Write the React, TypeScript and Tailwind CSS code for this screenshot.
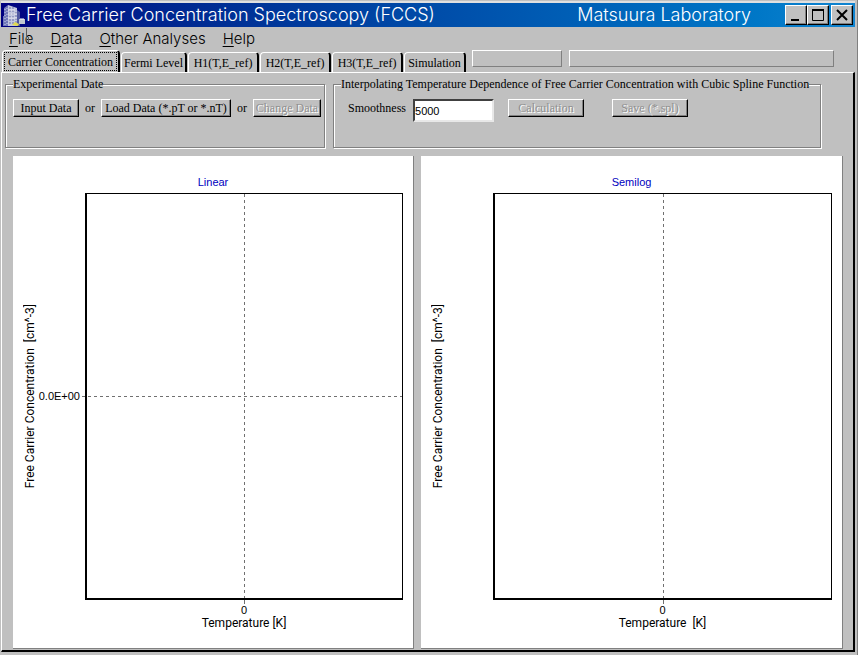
import type { ReactNode } from "react";

const CAPTION = "font-['Inter','Liberation_Sans',sans-serif] font-light";
const SANS = "font-['Liberation_Sans','Noto_Sans_CJK_JP',sans-serif]";
const AXIS = "font-['Roboto','Liberation_Sans',sans-serif] text-[12px]";
const SERIF = "font-['Liberation_Serif','Noto_Sans_CJK_JP',serif]";
const RAISED =
  "border border-t-white border-l-white border-r-black border-b-black shadow-[inset_-1px_-1px_0_#808080]";

function AppIcon() {
  return (
    <svg width="24" height="23" viewBox="0 0 24 23" aria-hidden="true" className="shrink-0">
      <path d="M3 4 L7 1 V22 H2 V12 H3Z" fill="#7078b8" />
      <path d="M7 1 L16 4 V22 H7Z" fill="#c4c8e0" />
      <path d="M16 6 L19 8 V22 H16Z" fill="#5058a0" />
      <path d="M9 3V21M12 3V21M15 5V21" stroke="#6870a8" strokeDasharray="2 1" />
      <path d="M4 5V21M6 4V21" stroke="#d0d4f0" strokeDasharray="1 2" />
      <path d="M7 6H16M7 10H16M7 14H16" stroke="#e8e8f0" />
      <path d="M18 15H24V20H18Z" fill="#c0c8d0" />
      <path d="M19 15H23" stroke="#fff" />
      <path d="M11 21 L14 18 L18 20 L17 22Z" fill="#e0d850" />
    </svg>
  );
}

function WindowButton({ label, children }: { label: string; children: ReactNode }) {
  return (
    <button aria-label={label} className={`flex h-5 w-[22px] items-center justify-center bg-[#c0c0c0] ${RAISED}`}>
      <svg width="16" height="16" viewBox="0 0 16 16" fill="none" stroke="#000" strokeWidth="2">
        {children}
      </svg>
    </button>
  );
}

function MenuItem({ text }: { text: string }) {
  return (
    <button className="leading-5">
      <span className="underline underline-offset-2">{text[0]}</span>
      {text.slice(1)}
    </button>
  );
}

function Tab({ text, width, active = false }: { text: string; width: string; active?: boolean }) {
  return (
    <button
      role="tab"
      aria-selected={active}
      className={`${width} ${active ? "h-[22px] p-px" : "h-5"} rounded-t-sm border-t border-l border-r-2 border-t-white border-l-white border-r-black whitespace-nowrap`}
    >
      <span className={`flex h-full items-center justify-center ${active ? "border border-dotted border-black" : ""}`}>
        {text}
      </span>
    </button>
  );
}

function PushButton({ children, width, disabled = false }: { children: string; width: string; disabled?: boolean }) {
  return (
    <button
      disabled={disabled}
      className={`${width} flex h-[18px] shrink-0 items-center justify-center whitespace-nowrap ${RAISED} ${
        disabled ? "text-[#909090] [text-shadow:1px_1px_0_#fff]" : ""
      }`}
    >
      {children}
    </button>
  );
}

function Group({ title, className, children }: { title: string; className: string; children: ReactNode }) {
  return (
    <fieldset
      className={`${className} h-[71px] min-w-0 border border-[#808080] px-[7px] shadow-[1px_1px_0_#fff,inset_1px_1px_0_#fff]`}
    >
      <legend className="bg-[#c0c0c0] leading-[14px] whitespace-nowrap">{title}</legend>
      {children}
    </fieldset>
  );
}

function Chart({ title, xLabel, tick }: { title: string; xLabel: string; tick?: string }) {
  return (
    <figure
      className={`${SANS} grid grid-cols-[72px_1fr] grid-rows-[37px_1fr_48px] border-r border-b border-[#808080] bg-white pr-2.5 text-[11px] leading-[13px]`}
    >
      <figcaption className="col-span-2 -mr-2.5 pt-5 text-center text-[#0000c0]">{title}</figcaption>
      <div className="flex items-center justify-between pr-[5px] pl-[11px]">
        <span className={`${AXIS} rotate-180 whitespace-pre [writing-mode:vertical-rl]`}>
          {"Free Carrier Concentration  [cm^-3]"}
        </span>
        <span>{tick}</span>
      </div>
      <div className="border-t border-r border-b-2 border-l-2 border-black">
        <svg width="100%" height="100%" className="block overflow-visible" stroke="#707070" strokeDasharray="3 3" shapeRendering="crispEdges">
          <line x1="50%" y1="0" x2="50%" y2="100%" />
          <svg y="100%" className="overflow-visible">
            <line x1="50%" y1="2" x2="50%" y2="6" strokeDasharray="none" />
          </svg>
          {tick && <line x1="-5" y1="50%" x2="100%" y2="50%" />}
        </svg>
      </div>
      <div className="col-start-2 pt-1 text-center whitespace-pre">
        <div>0</div>
        <div className={AXIS}>{xLabel}</div>
      </div>
    </figure>
  );
}

export default function App() {
  return (
    <div className="flex min-h-screen flex-col border-r border-[#808080] bg-[#c0c0c0] pt-px pr-0.5 pb-[3px] pl-px text-black">
      <header className="mb-px flex h-[26px] items-center border-t-2 border-[#e0e0e0] bg-linear-to-r from-[#000080] to-[#1084d0] pr-0.5 text-white">
        <AppIcon />
        <div className={`${CAPTION} flex flex-1 items-center justify-between pr-[34px] pl-px text-[18px] leading-6 whitespace-nowrap`}>
          <h1>Free Carrier Concentration Spectroscopy (FCCS)</h1>
          <span>Matsuura Laboratory</span>
        </div>
        <div className="flex">
          <WindowButton label="Minimize">
            <path d="M3 13H11" />
          </WindowButton>
          <WindowButton label="Maximize">
            <path d="M2 3H14" />
            <path d="M2.5 3V13.5H13.5V3" strokeWidth="1" />
          </WindowButton>
          <div className="w-0.5" />
          <WindowButton label="Close">
            <path d="M3 3L13 13M13 3L3 13" />
          </WindowButton>
        </div>
      </header>

      <nav className={`${CAPTION} relative flex h-[22px] items-center gap-[17px] pl-2 text-[15px]`}>
        <MenuItem text="File" />
        <MenuItem text="Data" />
        <MenuItem text="Other Analyses" />
        <MenuItem text="Help" />
        <svg width="6" height="16" viewBox="0 0 6 16" className="absolute top-0 left-6" stroke="#606060" fill="none">
          <path d="M1.5 0V13M3.5 9V15" />
        </svg>
      </nav>

      <div className={`${SERIF} flex items-end gap-px pl-px text-[12px] leading-[14px]`}>
        <div role="tablist" className="flex items-end gap-px">
          <Tab text="Carrier Concentration" width="w-[118px]" active />
          <Tab text="Fermi Level" width="w-[66px]" />
          <Tab text="H1(T,E_ref)" width="w-[71px]" />
          <Tab text="H2(T,E_ref)" width="w-[71px]" />
          <Tab text="H3(T,E_ref)" width="w-[71px]" />
          <Tab text="Simulation" width="w-[62px]" />
        </div>
        <div className="flex flex-1 gap-[7px] self-start pr-[21px] pl-[5px]">
          <div className="h-[17px] w-[90px] border border-t-white border-l-white border-r-[#808080] border-b-[#808080]" />
          <div className="h-[17px] flex-1 border border-t-white border-l-white border-r-[#808080] border-b-[#808080]" />
        </div>
      </div>

      <main
        className={`${SERIF} flex flex-1 flex-col border-t border-r-2 border-b-2 border-l border-t-white border-r-black border-b-black border-l-white pr-2.5 pb-px pl-[3px] text-[12px] leading-[14px]`}
      >
        <div className="flex gap-2 pt-1 pr-[22px]">
          <Group title="Experimental Date" className="w-80 shrink-0">
            <div className="flex items-center gap-1.5 pt-2">
              <PushButton width="w-[66px]">Input Data</PushButton>
              <span>or</span>
              <PushButton width="w-[130px]">Load Data (*.pT or *.nT)</PushButton>
              <span>or</span>
              <PushButton width="w-[68px]" disabled>
                Change Data
              </PushButton>
            </div>
          </Group>
          <Group
            title="Interpolating Temperature Dependence of Free Carrier Concentration with Cubic Spline Function"
            className="flex-1"
          >
            <div className="flex items-start pt-2 pl-[7px]">
              <label htmlFor="smoothness" className="leading-[18px]">
                Smoothness
              </label>
              <input
                id="smoothness"
                defaultValue="5000"
                className={`${SANS} ml-[7px] h-[23px] w-[81px] border-2 border-t-[#404040] border-r-[#e8e8e8] border-b-[#e8e8e8] border-l-[#404040] bg-white text-[11px]`}
              />
              <div className="ml-3.5 flex gap-7">
                <PushButton width="w-[76px]" disabled>
                  Calculation
                </PushButton>
                <PushButton width="w-[76px]" disabled>
                  Save (*.spl)
                </PushButton>
              </div>
            </div>
          </Group>
        </div>

        <div className="mt-2 grid flex-1 grid-cols-[401fr_422fr] gap-[7px] pl-2">
          <Chart title="Linear" xLabel="Temperature [K]" tick="0.0E+00" />
          <Chart title="Semilog" xLabel="Temperature  [K]" />
        </div>
      </main>
    </div>
  );
}
